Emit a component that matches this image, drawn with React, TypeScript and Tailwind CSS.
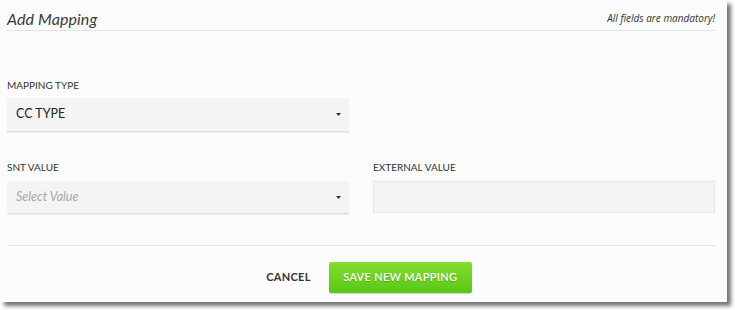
import React from "react";

function Caret() {
  return (
    <svg width="5" height="3" viewBox="0 0 5 3" className="shrink-0">
      <path d="M0 0 H5 L2.5 3 Z" fill="#333" />
    </svg>
  );
}

export default function App() {
  return (
    <div className="w-[735px] h-[310px] bg-white" style={{ fontFamily: "Lato, 'Open Sans', sans-serif" }}>
      <div className="w-[727px] h-[302px] bg-[#fcfcfc] shadow-[4px_4px_4px_rgba(0,0,0,0.55)] px-[7px] pt-[6px] flex flex-col">
        <div className="flex items-end justify-between border-b border-[#e2e2e2] h-[25px] pb-[3px] mr-[5px]">
          <span className="italic text-[16px] leading-none text-[#3a3a3a] tracking-[0.1px]">Add Mapping</span>
          <span className="italic text-[10px] leading-none text-[#333] mb-[4px]" style={{ fontFamily: "'Open Sans', sans-serif" }}>All fields are mandatory!</span>
        </div>

        <div className="mt-[49px] text-[10px] leading-none text-[#333]">MAPPING TYPE</div>
        <div className="mt-[8px] w-[342px] h-[34px] bg-[#f4f4f4] border-b border-[#e0e0e0] shadow-[0_1px_1px_rgba(0,0,0,0.06)] flex items-center justify-between pl-[9px] pr-[8px]">
          <span className="text-[12.5px] text-[#222]">CC TYPE</span>
          <Caret />
        </div>

        <div className="mt-[30px] grid grid-cols-[342px_342px] gap-x-[24px]">
          <div className="flex flex-col">
            <div className="text-[10px] leading-none text-[#333]">SNT VALUE</div>
            <div className="mt-[9px] h-[33px] bg-[#f4f4f4] border-b border-[#e0e0e0] shadow-[0_1px_1px_rgba(0,0,0,0.06)] flex items-center justify-between pl-[9px] pr-[8px]">
              <span className="italic text-[12.5px] text-[#a8a8a8]">Select Value</span>
              <Caret />
            </div>
          </div>
          <div className="flex flex-col">
            <div className="text-[10px] leading-none text-[#333]">EXTERNAL VALUE</div>
            <div className="mt-[9px] h-[32px] bg-[#f4f4f4] border border-[#e6e6e6]" />
          </div>
        </div>

        <div className="mt-[31px] border-t border-[#e2e2e2] mr-[5px]" />

        <div className="flex items-center justify-center gap-[18px] mt-[16px] pl-[11px]">
          <span className="font-bold text-[11px] text-[#333] tracking-[0.3px]">CANCEL</span>
          <div className="w-[143px] h-[31px] rounded-[2px] bg-gradient-to-b from-[#86dc2c] to-[#56c716] shadow-[0_1px_1px_rgba(0,0,0,0.15)] flex items-center justify-center">
            <span className="text-white text-[11px] font-semibold tracking-[0.3px] [text-shadow:0_1px_1px_rgba(0,0,0,0.2)]">SAVE NEW MAPPING</span>
          </div>
        </div>
      </div>
    </div>
  );
}
